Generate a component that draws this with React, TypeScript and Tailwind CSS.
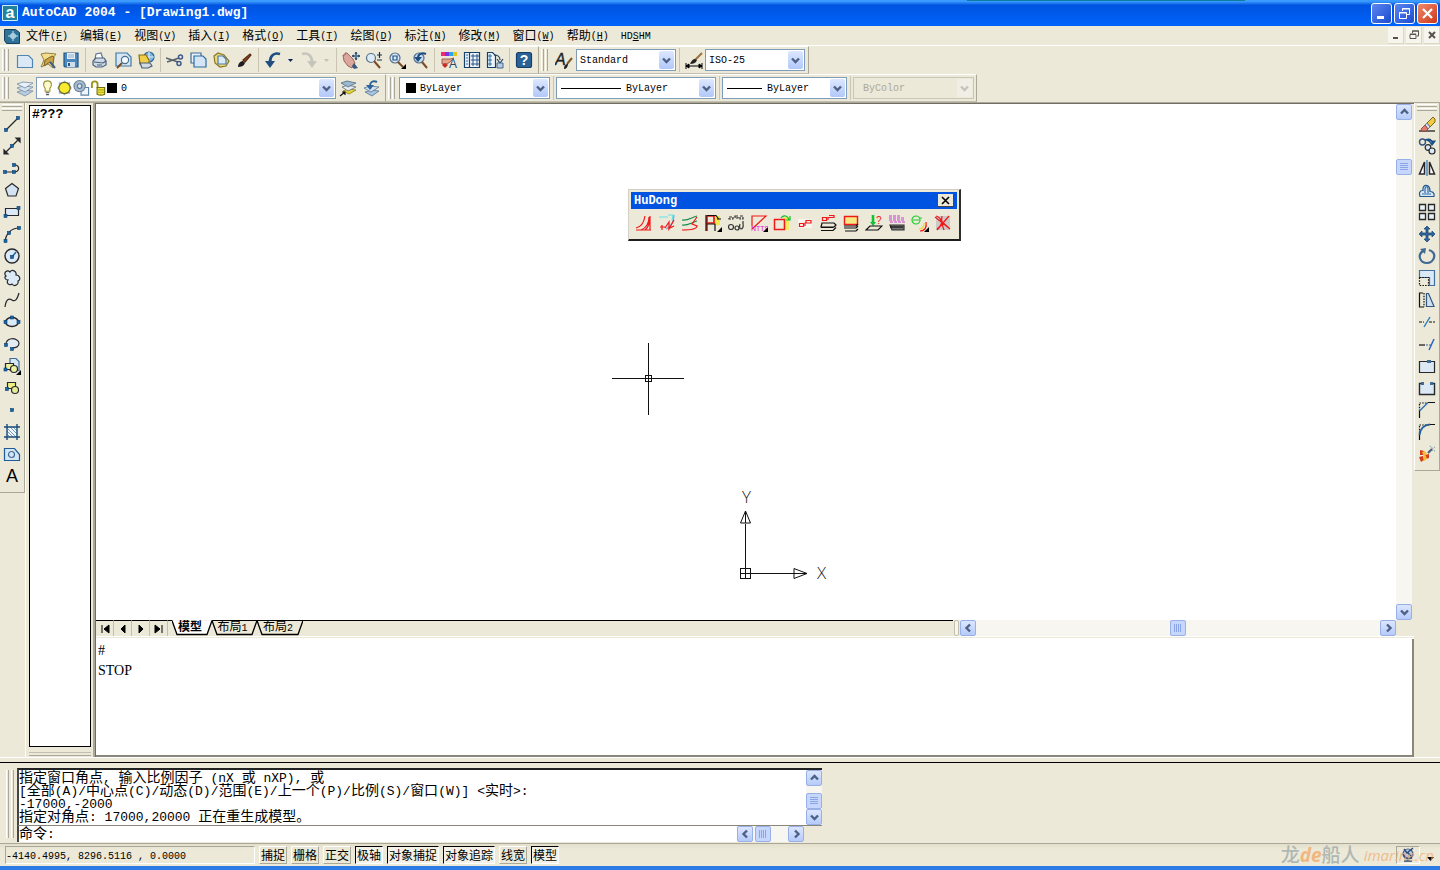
import type { ReactNode } from "react";

const MONO = "font-['Liberation_Mono','Noto_Sans_CJK_SC',monospace]";
const SANS = "font-['Liberation_Sans',sans-serif]";

interface Tool {
  name: string;
  icon: ReactNode;
}

const ink = "#26282c";
const blue = "#1767a8";
const steel = "#3f6d96";

function Dot({ x, y }: { x: number; y: number }) {
  return <rect x={x - 1.5} y={y - 1.5} width="3" height="3" fill={blue} stroke="#0c3f6e" strokeWidth=".6" />;
}

function Icon({ children }: { children: ReactNode }) {
  return (
    <svg width="18" height="18" viewBox="0 0 18 18" fill="none" stroke={ink} strokeWidth="1.2" aria-hidden="true">
      {children}
    </svg>
  );
}

function Corner() {
  return <path d="M18 13v5h-5z" fill="#000" stroke="none" />;
}

// Renders mixed text: Chinese runs one step larger than Latin runs
function Label({ text, size = "small" }: { text: string; size?: "small" | "large" }) {
  const cjk = size === "small" ? "text-[12px]" : "text-[14px]";
  const latin = size === "small" ? "text-[10px]" : "text-[13px]";
  return (
    <>
      {text.split(/([\u3000-\u9fff]+)/).filter(Boolean).map((run, i) => (
        <span key={i} className={/[\u3000-\u9fff]/.test(run) ? cjk : latin}>{run}</span>
      ))}
    </>
  );
}

/* ---------- standard toolbar ---------- */

const fileTools: Tool[] = [
  { name: "新建", icon: <path d="M1.500 4.500h11l4 4v8h-15z" fill="#dbe9f7" stroke="#4f86b5" /> },
  { name: "打开", icon: <><path d="M2 3l5-1 10 1-4 5 1 9-5-4-7 3 3-7z" fill="#f3dc8e" stroke="#8a7636" strokeWidth=".9" /><path d="M6 9l7-4 2 1-1 8-3-3-6 4z" fill="#c9a043" stroke="#6e5a20" strokeWidth=".9" /><path d="M11 11l5 6" stroke="#3e5f80" strokeWidth="2" /></> },
  { name: "保存", icon: <><path d="M2 2h14v14H3l-1-1z" fill="#4d88bd" stroke="#235683" /><path d="M5 2h8v6H5z" fill="#e5eef7" stroke="none" /><path d="M6 4h6M6 6h6" stroke="#8eb0cf" /><path d="M5 11h8v5H5z" fill="#cfdeea" stroke="none" /><path d="M7 12v3" stroke="#235683" strokeWidth="2" /></> },
];

const printTools: Tool[] = [
  { name: "打印", icon: <><path d="M4 8l1-5 5-1 2 6" fill="#fff" stroke="#5c7390" /><path d="M2 10l3-3h8l2 3v4l-4 2H5l-3-2z" fill="#cfdae6" stroke="#49607b" /><path d="M3 11l9 1 3-2M6 14h5" stroke="#49607b" /></> },
  { name: "打印预览", icon: <><path d="M2 2h11l4 4v9H2z" fill="#d6e6f5" stroke="#3f78a9" /><circle cx="11" cy="9" r="3.600" fill="#f5fbff" stroke="#49708f" /><path d="M8 12l-5 5" stroke="#7a4a22" strokeWidth="2" /></> },
  { name: "发布", icon: <><circle cx="12" cy="6" r="5" fill="#7fb5de" stroke="#2c6694" /><path d="M12 1v10M7 6h10" stroke="#d8ecfa" /><path d="M2 4h7l3 5v4H3z" fill="#f3cf45" stroke="#8a6f1c" /><path d="M3 12h10l2 3-4 2H5z" fill="#d2dbe4" stroke="#4c5f74" /></> },
];

const editTools: Tool[] = [
  { name: "剪切", icon: <><path d="M0 7l12 4M1 11l12-4" stroke="#56616e" strokeWidth="1.500" /><circle cx="14.500" cy="6" r="2" stroke="#3d5b8c" strokeWidth="1.500" /><circle cx="13" cy="12.500" r="2" stroke="#3d5b8c" strokeWidth="1.500" /></> },
  { name: "复制", icon: <><path d="M2 2h10v10H2z" fill="#e6f1fa" stroke={steel} /><path d="M5 5h9l3 3v8H5z" fill="#d4e6f5" stroke="#2b6ca3" /></> },
  { name: "粘贴", icon: <><path d="M2 5l4-3 6 2 5 6-3 5-6 1-5-4z" fill="#ecd97e" stroke="#8b7526" /><path d="M6 5h5l3 3v5H6z" fill="#dceaf6" stroke="#4a7ba3" /></> },
  { name: "特性匹配", icon: <><path d="M8 9l7-6 1 1-6 7z" fill="#8a4b25" stroke="#5b2b12" /><path d="M3 16c0-4 3-6 5-6l2 2c-1 3-4 4-7 4z" fill="#1f1f1f" stroke="none" /></> },
];

const undoIcon = <><path d="M16 3c-6-2-10 2-10 8" stroke="#1f4e80" strokeWidth="2.600" /><path d="M1 10h10l-5 7z" fill="#1f4e80" stroke="none" /></>;
const redoIcon = <><path d="M2 3c6-2 10 2 10 8" stroke="#c6c5bb" strokeWidth="2.600" /><path d="M7 10h10l-5 7z" fill="#c6c5bb" stroke="none" /></>;

const zoomTools: Tool[] = [
  { name: "实时平移", icon: <><path d="M1 4l2 0 0-2 2 0 6 6 2 4-3 5-4-2-4-5z" fill="#dba79c" stroke="#8a4b43" strokeWidth=".8" /><path d="M12 12l4 5-4 1-2-3z" fill="#335a86" stroke="none" /><path d="M14 1v8M10 5h8M14 1l-1 2h2zM14 9l-1-2h2zM10 5l2-1v2zM18 5l-2-1v2z" stroke="#20456f" strokeWidth=".9" /></> },
  { name: "实时缩放", icon: <><circle cx="6" cy="7" r="4.500" fill="#dcebf6" stroke="#56718c" /><path d="M9 10l6 7" stroke="#7b4a26" strokeWidth="2" /><path d="M12 4h5M14.500 1v6M12 9h5" stroke="#17324f" /></> },
  { name: "窗口缩放", icon: <><circle cx="7" cy="7" r="5" fill="#dcebf6" stroke="#56718c" /><path d="M5 5h4v4H5z" stroke="#1b4e82" /><path d="M10 11l5 5" stroke="#7b4a26" strokeWidth="2" /><Corner /></> },
  { name: "缩放上一个", icon: <><circle cx="8" cy="7" r="5" fill="#c7dcef" stroke="#56718c" /><path d="M15 3c-4-2-8 0-8 4" stroke="#1d4d80" strokeWidth="2" /><path d="M3 6h8l-4 5z" fill="#1d4d80" stroke="none" /><path d="M11 11l5 6" stroke="#7b4a26" strokeWidth="2" /></> },
];

const paletteTools: Tool[] = [
  { name: "特性", icon: <><path d="M1 1h4v4H1z" fill="#f02a75" stroke="none" /><path d="M5 1h4v4H5z" fill="#7b35e0" stroke="none" /><path d="M9 1h4v4H9z" fill="#25a9e8" stroke="none" /><path d="M13 1h4v4h-4z" fill="#e5c421" stroke="none" /><path d="M2 8h8l4-1-4 4-3 2H2z" fill="#e4a58f" stroke="#854a3b" strokeWidth=".8" /><path d="M2 14l3-2 3 2-3 3z" fill="#c52d22" stroke="none" /><text x="9" y="17" fontSize="12" fill="#254b77" stroke="none" className={SANS}>A</text></> },
  { name: "设计中心", icon: <><path d="M1.500 1.500h15v15h-15zM6.500 2v14" fill="#eef4fa" stroke="#17416b" /><path d="M3 4h2M3 7h2M3 10h2M3 13h2" stroke="#2c6ca6" /><path d="M9 4h2v2H9zM13 4h2v2h-2zM9 8h2v2H9zM13 8h2v2h-2zM9 12h2v2H9zM13 12h2v2h-2z" stroke="#2a5686" strokeWidth="1" /></> },
  { name: "工具选项板", icon: <><path d="M1.500 1.500h5l3 3v12h-8z" fill="#eef4fa" stroke="#17416b" /><path d="M3 4h2v2H3zM3 8h2v2H3zM3 12h2v2H3z" stroke="#2c6ca6" strokeWidth="1" /><path d="M8 4c4 0 6 1 6 5M11 8l3 4 3-4" stroke="#23405f" /><path d="M11 12h6v5h-6z" fill="#b6cde2" stroke="#45698c" strokeWidth="1" /></> },
];

const helpIcon = (
  <>
    <rect x="1.500" y="1.500" width="15" height="15" rx="2" fill="#2a6297" stroke="#163f69" />
    <text x="9" y="14" fontSize="14" fontWeight="bold" textAnchor="middle" fill="#fff" stroke="none" className={SANS}>?</text>
  </>
);

const textStyleIcon = <><text x="0" y="14" fontSize="16" fill="#1c1f23" stroke="#1c1f23" strokeWidth=".4" fontStyle="italic" className={SANS}>A</text><path d="M12 13l5-6" stroke="#82572a" strokeWidth="2" /><path d="M9 18c0-4 2-5 4-5 0 3-2 5-4 5z" fill="#222" stroke="none" /></>;
const dimStyleIcon = <><path d="M1 12v6M17 12v6M1 15h16M1 15l3-2v4zM17 15l-3-2v4z" fill="#000" stroke="#000" strokeWidth="1" /><path d="M10 9l7-7" stroke="#a0703a" strokeWidth="2" /><path d="M5 13c1-3 3-5 5-5l2 1c-1 3-4 4-7 4z" fill="#222" stroke="none" /></>;

/* ---------- layer toolbar ---------- */

const layerStack = <><path d="M1 13l6-2 10 1-8 5z" fill="#b9cde1" stroke="#7189a3" strokeWidth=".8" /><path d="M1 9l6-2 10 1-8 5z" fill="#d4e1ee" stroke="#7189a3" strokeWidth=".8" /><path d="M1 5l6-2 10 1-8 5z" fill="#e8f0f7" stroke="#7189a3" strokeWidth=".8" /></>;
const layerCurrent = <><path d="M4 12l5-2 8 1-7 4z" fill="#e8d531" stroke="#8a7d22" strokeWidth=".8" /><path d="M3 8l6-2 8 2-8 4z" fill="#e7ecef" stroke="#5d6d7c" strokeWidth=".8" /><path d="M2 4l6-2 9 2-8 4z" fill="#9db9cf" stroke="#4c6b86" strokeWidth=".8" /><path d="M1 17l5-4M3 13h3v3" stroke="#111" /></>;
const layerPrevious = <><path d="M3 13l6-2 8 1-7 5z" fill="#a7c4de" stroke="#557694" strokeWidth=".8" /><path d="M2 9l6-2 9 1-8 5z" fill="#d4e1ee" stroke="#557694" strokeWidth=".8" /><path d="M15 3c-4-2-7 0-7 4" stroke="#2b649b" strokeWidth="2" /><path d="M4 6h8l-4 5z" fill="#2b649b" stroke="none" /></>;

const layerState = [
  <><path d="M9 1.500c-5 0-5 5-2.500 8v3h5v-3C14 6.500 14 1.500 9 1.500z" fill="#fdfacb" stroke="#9b943a" /><path d="M7 14h4M7.500 16h3" stroke="#555" /></>,
  <><path d="M9 1l8 8-8 8-8-8zM3 3h12v12H3z" fill="#9bb8d8" stroke="none" /><circle cx="9" cy="9" r="6" fill="#f8ea31" stroke="#6b6b2a" /></>,
  <><path d="M8.500 8.500h8v8h-8z" fill="#eef5fb" stroke="#5f84a6" /><circle cx="7" cy="7" r="6" fill="#a9bccf" stroke="#6d8299" /><circle cx="7" cy="7" r="2.500" fill="#d8e7f2" stroke="#5a7795" /></>,
  <><path d="M2 9V5c0-4 6-4 6 0v4" stroke="#9b941e" strokeWidth="2" /><path d="M7.500 8.500h8v7c-2 1-6 1-8 0z" fill="#efe83a" stroke="#716b12" /><path d="M8 11h7M8 13.500h7" stroke="#b1a91f" /></>,
];

/* ---------- draw toolbar ---------- */

const drawTools: Tool[] = [
  { name: "直线", icon: <><path d="M3 15L15 3" /><Dot x={3} y={15} /><Dot x={15} y={3} /></> },
  { name: "构造线", icon: <><path d="M2 16L16 2M1 17v-4l4 4zM17 1v4l-4-4z" fill={ink} /><Dot x={9} y={9} /></> },
  { name: "多段线", icon: <><path d="M2 13h9c6 0 6-7 1-7" /><Dot x={2} y={13} /><Dot x={11} y={13} /><Dot x={11} y={6} /></> },
  { name: "正多边形", icon: <path d="M9 2.500l6.500 5-2.500 7.500H5L2.500 7.500z" fill="#d4e3f1" /> },
  { name: "矩形", icon: <><path d="M2.500 5.500h13v7h-13z" fill="#dce9f6" /><Dot x={2.5} y={13} /><Dot x={15.500} y={5} /></> },
  { name: "圆弧", icon: <><path d="M2 16C3 9 8 3 16 3" /><Dot x={2.500} y={16} /><Dot x={6} y={8} /><Dot x={16} y={3} /></> },
  { name: "圆", icon: <><circle cx="9" cy="9" r="7" fill="#dce9f6" strokeWidth="1.400" /><path d="M9 10l4-5" stroke={blue} strokeWidth="1.500" /><Dot x={9} y={10} /></> },
  { name: "修订云线", icon: <path d="M3 7C0 4 4 0 7 3c2-3 7-1 6 3 4 0 5 5 2 6 1 4-4 6-6 3-3 2-6-1-4-4-3 0-4-3-2-4z" fill="#dce9f6" /> },
  { name: "样条曲线", icon: <path d="M2 16c1-8 4-9 7-7s5 0 7-7" /> },
  { name: "椭圆", icon: <><ellipse cx="9" cy="9" rx="6.500" ry="4.500" fill="#dce9f6" strokeWidth="1.500" /><Dot x={2.500} y={9} /><Dot x={15.500} y={9} /><Dot x={9} y={4.5} /></> },
  { name: "椭圆弧", icon: <><path d="M3 10C2 2 15 2 16 8c0 4-4 5-7 5" fill="#e3ebf3" /><Dot x={3} y={10} /><Dot x={9} y={14} /></> },
  { name: "插入块", icon: <><path d="M7 1.500h6l3 3v9H7z" fill="#d7e7f6" stroke={steel} /><path d="M2.500 6.500h8v6h-8z" fill="#eff0a0" /><circle cx="11" cy="12" r="3.500" fill="#eff0a0" /><Dot x={2.500} y={12.500} /><Corner /></> },
  { name: "创建块", icon: <><path d="M4.500 3.500h8v6h-8z" fill="#f0f07c" /><circle cx="12" cy="11" r="3.500" fill="#e5eb94" /><Dot x={4} y={10} /></> },
  { name: "点", icon: <Dot x={9} y={9} /> },
  { name: "图案填充", icon: <><path d="M4 4h10v10H4z" fill="#f3f8fd" stroke="none" /><path d="M4 5l9 9M4 8l6 6M7 4l7 7M10 4l4 4M4 11l3 3" stroke="#4d7dab" strokeWidth=".8" /><path d="M4 1v16M14 1v16M1 4h16M1 14h16" stroke="#1b4a78" strokeWidth="1.400" /></> },
  { name: "面域", icon: <><path d="M1.500 3.500h10l5 6v6h-15z" fill="#d4e5f6" stroke="#1f5c97" /><circle cx="8.500" cy="9.500" r="3" stroke={steel} /></> },
];

/* ---------- modify toolbar ---------- */

const modifyTools: Tool[] = [
  { name: "删除", icon: <><path d="M1 16h16" stroke="#111" /><path d="M9 8l6-6 2 2v3l-5 5z" fill="#f0cb40" stroke="#6d5a1d" strokeWidth=".9" /><path d="M7 10l2-2 3 4-2 2z" fill="#d3e2f0" stroke="#4d6c8b" strokeWidth=".8" /><path d="M3 14l4-4 3 4-2 2H4z" fill="#e37c6e" stroke="#8c3f36" strokeWidth=".8" /></> },
  { name: "复制对象", icon: <><circle cx="4.500" cy="5" r="3" stroke="#33547a" strokeWidth="1.400" /><path d="M7 3c4-2 7-1 7 3M11 4l3 4 3-4z" fill="#174e86" stroke="#174e86" /><circle cx="10" cy="10.500" r="2.800" fill="#dce9f6" /><circle cx="14" cy="14" r="3" fill="#dce9f6" /></> },
  { name: "镜像", icon: <><path d="M6.500 3v12h-5zM11.500 3v12h5z" fill="#fff" strokeWidth="1.500" /><path d="M9 1v16" stroke="#2a70b8" /></> },
  { name: "偏移", icon: <><path d="M2 15.500h14c1-4-2-5-4-5 0-8-8-8-7-1-4 0-4 3-3 6z" fill="#d8e7f6" stroke="#25598c" /><path d="M4 13h9M7 12V8c0-3 3-3 3 0v4" stroke="#2d6ca6" /></> },
  { name: "阵列", icon: <path d="M1.500 1.500h6v6h-6zM10.500 1.500h6v6h-6zM1.500 10.500h6v6h-6zM10.500 10.500h6v6h-6z" fill="#eaf2f9" strokeWidth="1.300" /> },
  { name: "移动", icon: <path d="M9 1l3 3h-2v4h4V6l3 3-3 3v-2h-4v4h2l-3 3-3-3h2v-4H4v2L1 9l3-3v2h4V4H6z" fill="#2f659a" stroke="#204d78" strokeWidth=".8" /> },
  { name: "旋转", icon: <><path d="M11 3c9 3 5 13-2 13S-1 8 5 4" stroke="#416a92" strokeWidth="2.200" /><path d="M2 2l6-1-1 6z" fill="#416a92" stroke="none" /></> },
  { name: "缩放", icon: <><path d="M1.500 1.500h15v15h-5v-8h-10z" fill="#dbe8f5" stroke="#41729f" /><path d="M1.500 8.500h9v8h-9z" stroke="#111" strokeDasharray="1.500 1.200" /></> },
  { name: "拉伸", icon: <><path d="M5 2H1.500v14H6" stroke="#111" /><path d="M6 2v14" stroke="#111" strokeDasharray="1.500 1.200" /><path d="M8.500 2.500h2L16 15.500H8.500z" fill="#d0e0ef" stroke="#31577c" /></> },
  { name: "修剪", icon: <><path d="M1 9h5M11 9h6" stroke="#111" strokeDasharray="3 1" /><path d="M6 14l6-10" stroke="#2878c4" strokeWidth="1.400" /></> },
  { name: "延伸", icon: <><path d="M1 10h6" stroke="#111" /><path d="M8 10h5" stroke="#2a66a8" strokeDasharray="2 1" /><path d="M11 15l5-11" stroke="#2766c4" strokeWidth="1.500" /></> },
  { name: "打断于点", icon: <><path d="M1.500 4.500h15v11h-15z" fill="#dce9f5" /><path d="M9 3h4v3H9z" fill="#3d6c99" stroke="none" /></> },
  { name: "打断", icon: <><path d="M4 4.500H1.500v11h15v-11H14" fill="#dce9f5" strokeWidth="1.400" /><path d="M3 3h3v3H3zM12 3h3v3h-3z" fill="#3d6c99" stroke="none" /></> },
  { name: "倒角", icon: <><path d="M1.500 2h7" stroke="#111" strokeDasharray="1.500 1.200" /><path d="M1.500 3v7" stroke="#111" strokeDasharray="1.500 1.200" /><path d="M10 1.500h7M1.500 10v7" stroke="#111" /><path d="M1.500 10L10 1.500" stroke="#2c72b4" strokeWidth="1.500" /></> },
  { name: "圆角", icon: <><path d="M1.500 2h8M1.500 3v7" stroke="#111" strokeDasharray="1.500 1.200" /><path d="M12 1.500h5M1.500 12v5" stroke="#111" /><path d="M1.500 12C2 6 6 2 12 1.500" stroke="#235f98" strokeWidth="2" /></> },
  { name: "分解", icon: <><path d="M10 8l4-4" stroke="#46607c" strokeWidth="2.200" /><path d="M12 1l2 2M17 2l-3 2M17 6l-3-1" stroke="#8d9fb0" strokeDasharray="1 1" /><path d="M2 5l4 1-1 4H2zM7 10l4-1 0 4-3 1zM1 12l4-1 1 4-3 2z" fill="#d43c1c" stroke="none" /><path d="M4 7l3-1 2 3-3 3zM5 12l3-1 1 3-3 2z" fill="#f2bd38" stroke="none" /></> },
];

/* ---------- HuDong floating toolbar ---------- */

const red = "#f01818";
const huDongTools: Tool[] = [
  { name: "型线", icon: <><path d="M1 16h15M1 14c5-1 8-6 9-12M6 16c5-2 8-7 8-13M10 16c4-3 5-8 5-14v14" stroke={red} /></> },
  { name: "曲线", icon: <><path d="M1 3h9M10 1h5l-1 5" stroke="#5be3ec" /><path d="M16 1c0 6-3 11-8 14" stroke="#7fa6d8" /><path d="M2 13h5M4 11v5M7 14l4-6v7l5-9M10 15l6-3" stroke={red} /></> },
  { name: "缆线", icon: <><path d="M1 6c6 1 10-3 15-4M1 11c6 1 10-3 15-4" stroke="#1a8b4d" /><path d="M1 16c10 0 15-1 15-4l-5-2 5-7" stroke={red} /></> },
  { name: "定位", icon: <><path d="M9 2h7v9H9z" fill="#f2e84b" stroke="none" /><path d="M3 2h7v7H3zM3 9v8" stroke={red} strokeWidth="1.700" /><path d="M2 1v16M3 1.500h9l3 4M3 10h8v7M13 5h4" stroke="#111" /><Corner /></> },
  { name: "连接", icon: <><path d="M2 3h4v2H2zM8 2h3v2H8zM13 2h3v3h-3zM16 7v4" strokeDasharray="3 1" stroke="#333" /><circle cx="4" cy="13" r="2.500" stroke="#333" /><circle cx="10" cy="14" r="2" stroke="#333" /><path d="M13 10c-1 3 0 5 1 5s3-2 2-5" stroke="#333" /></> },
  { name: "注释", icon: <><path d="M2 12V2h14L2 15" stroke={red} strokeWidth="1.200" /><text x="1" y="17" fontSize="7" fill="#e21bdb" stroke="none" className={SANS}>NTTS</text><Corner /></> },
  { name: "移位", icon: <><path d="M10 3h6v13h-6z" fill="#f5ec63" stroke="none" /><path d="M1.500 5.500h10v10h-10z" stroke={red} strokeWidth="1.500" /><path d="M8 4c3-4 7-2 8 2M13 6h4V2" stroke="#12ba32" /></> },
  { name: "标签", icon: <><path d="M2 5h14v9H2z" fill="#f6f5ee" stroke="none" /><path d="M3.500 9.500h4v3h-4zM9 12V9h6V6.500h-5V9" stroke={red} /></> },
  { name: "批量标签", icon: <><path d="M3.500 3.500h4v3h-4zM9 6V3.500h6V1.500h-5" stroke={red} /><path d="M3 9h12l2 2-2 2H2zM2 13.500h12l3-2M2 16.500h12l3-3" stroke="#111" /></> },
  { name: "图层", icon: <><path d="M2.500 2.500h13v8h-13z" fill="#f8e882" stroke={red} strokeWidth="1.400" /><path d="M2 12h12l2-2M2 14h12l2-2M3 17h11l2-2" stroke="#111" /></> },
  { name: "查询", icon: <><path d="M8 1v9" stroke="#12c434" strokeWidth="2.600" /><path d="M5 8h6l-3 4z" fill="#12c434" stroke="none" /><text x="11" y="10" fontSize="10" fill={red} stroke="none" className={SANS}>?</text><path d="M1 16l4-4h12l-4 4z" stroke="#111" /></> },
  { name: "列表", icon: <><path d="M1 2h11M1 4h15M1 6h16M2 8h15" stroke="#c640d4" strokeDasharray="3 1" /><path d="M2 11h14v5H4z" fill="#777" stroke="#333" /><path d="M2 13h13" stroke="#111" /></> },
  { name: "旋转对象", icon: <><circle cx="5" cy="6" r="4" stroke="#1ccd2c" /><path d="M2 6h6M8 4h3" stroke="#1ccd2c" /><path d="M9 17c5 0 7-4 6-9" stroke={red} /><path d="M8 15c4 0 5-3 5-6" stroke="#f0db38" strokeWidth="1.500" /><Corner /></> },
  { name: "删除线", icon: <><path d="M2 2h14v14H2z" fill="#cccac8" stroke="none" /><path d="M1 3l15 12M15 2L3 16M2 2c6 2 8 8 1 13M8 2c-1 5 0 9 2 14M6 6l9 8" stroke={red} /></> },
];

/* ---------- shared pieces ---------- */

function ToolButton({ tool, className }: { tool: Tool; className: string }) {
  return (
    <button type="button" title={tool.name} aria-label={tool.name} className={`flex shrink-0 items-center justify-center ${className}`}>
      <Icon>{tool.icon}</Icon>
    </button>
  );
}

function ToolRow({ tools }: { tools: Tool[] }) {
  return (
    <>
      {tools.map((tool) => (
        <ToolButton key={tool.name} tool={tool} className="h-6 w-[23px]" />
      ))}
    </>
  );
}

function Separator() {
  return <div className="mr-0.5 ml-[3px] h-6 w-px shrink-0 bg-[#c9c5b2]" />;
}

function Grip() {
  return (
    <div className="mr-1 flex shrink-0 gap-px self-stretch py-0.5">
      <div className="w-[3px] border-r border-l border-r-[#aca899] border-l-white" />
      <div className="w-[3px] border-r border-l border-r-[#aca899] border-l-white" />
    </div>
  );
}

function GripTop() {
  return (
    <div className="mb-0.5 flex w-full flex-col gap-px px-0.5 pt-px">
      <div className="h-[3px] border-t border-b border-t-white border-b-[#aca899]" />
      <div className="h-[3px] border-t border-b border-t-white border-b-[#aca899]" />
    </div>
  );
}

function CaretButton({ label, faded }: { label: string; faded?: boolean }) {
  return (
    <button type="button" aria-label={label} className="flex h-6 w-[13px] shrink-0 items-center justify-center">
      <svg width="5" height="3" aria-hidden="true">
        <path d="M0 0h5L2.500 3z" fill={faded ? "#c4c1b2" : "#0b2456"} />
      </svg>
    </button>
  );
}

const chevrons = {
  up: "M2 6.500l3.500-3.500L9 6.500",
  down: "M2 3.500L5.500 7 9 3.500",
  left: "M7 1.500L3.500 5 7 8.500",
  right: "M4 1.500L7.500 5 4 8.500",
};

function Chevron({ dir, color = "#4d6185" }: { dir: keyof typeof chevrons; color?: string }) {
  return (
    <svg width="11" height="10" viewBox="0 0 11 10" aria-hidden="true">
      <path d={chevrons[dir]} fill="none" stroke={color} strokeWidth="2.400" />
    </svg>
  );
}

interface ComboProps {
  label: string;
  value: string;
  width: string;
  disabled?: boolean;
  children?: ReactNode;
}

function Combo({ label, value, width, disabled, children }: ComboProps) {
  return (
    <div className={`flex h-[22px] shrink-0 items-center border pr-px ${width} ${disabled ? "border-[#c9c7ba] bg-[#ece9d8]" : "border-[#7f9db9] bg-white"}`}>
      {children}
      <select
        aria-label={label}
        disabled={disabled}
        className={`h-full min-w-0 flex-1 appearance-none bg-transparent text-[10px] outline-none ${disabled ? "pl-[9px] text-[#aca899] opacity-100" : "pl-[3px] text-black"}`}
      >
        <option>{value}</option>
      </select>
      <span className={`flex h-[18px] w-[15px] shrink-0 items-center justify-center rounded-xs ${disabled ? "bg-[#f1efe5]" : "bg-linear-to-b from-[#dde7ff] to-[#b2c8f9]"}`}>
        <Chevron dir="down" color={disabled ? "#c6c4b8" : "#4d6185"} />
      </span>
    </div>
  );
}

function ScrollButton({ dir }: { dir: keyof typeof chevrons }) {
  return (
    <button type="button" aria-label={`scroll ${dir}`} className="flex size-4 shrink-0 items-center justify-center rounded-xs border border-[#98b0e8] bg-linear-to-b from-[#dce6ff] to-[#b6cbfa]">
      <Chevron dir={dir} />
    </button>
  );
}

function Thumb({ vertical }: { vertical?: boolean }) {
  return (
    <div className="flex size-4 shrink-0 items-center justify-center rounded-xs border border-[#98b0e8] bg-[#c6d6fd]">
      <svg width="8" height="8" aria-hidden="true">
        <path d={vertical ? "M0 .5h8M0 2.500h8M0 4.500h8M0 6.500h8" : "M.5 0v8M2.500 0v8M4.500 0v8M6.500 0v8"} stroke="#8ba4e6" />
      </svg>
    </div>
  );
}

/* ---------- window sections ---------- */

function TitleBar() {
  const button = "flex size-[21px] items-center justify-center rounded-[3px] border border-white";
  return (
    <header className="relative flex h-[26px] shrink-0 items-center bg-linear-to-b from-[#3c9bff] from-5% via-[#0053e0] via-20% to-[#0064fc] px-0.5">
      <div className="absolute top-0 right-[195px] h-px w-[278px] bg-[#0b7e9e]" />
      <svg width="16" height="16" viewBox="0 0 16 16" aria-hidden="true">
        <path d="M.5.5h15v15H.5z" fill="#21839b" stroke="#d5edf2" />
        <text x="8" y="13" fontSize="16" fontWeight="bold" textAnchor="middle" fill="#fff" className={SANS}>a</text>
      </svg>
      <h1 className="ml-1 flex-1 text-[13px] font-bold whitespace-pre text-white">AutoCAD 2004 - [Drawing1.dwg]</h1>
      <div className="flex gap-0.5">
        <button type="button" aria-label="minimize" className={`bg-linear-to-br from-[#5c86ef] to-[#1c49d0] ${button}`}>
          <svg width="13" height="13" aria-hidden="true"><path d="M2 9h7v3H2z" fill="#fff" /></svg>
        </button>
        <button type="button" aria-label="restore" className={`bg-linear-to-br from-[#5c86ef] to-[#1c49d0] ${button}`}>
          <svg width="13" height="13" fill="none" stroke="#fff" aria-hidden="true"><path d="M4.500 4V1.500h7v6H9M4 2h8M1.500 5.500h7v6h-7zM1 6h8" /></svg>
        </button>
        <button type="button" aria-label="close" className={`bg-linear-to-br from-[#f0886a] to-[#cc3310] ${button}`}>
          <svg width="13" height="13" aria-hidden="true"><path d="M2 2l9 9M11 2l-9 9" stroke="#fff" strokeWidth="2.200" /></svg>
        </button>
      </div>
    </header>
  );
}

const menus = [
  ["文件", "F"], ["编辑", "E"], ["视图", "V"], ["插入", "I"], ["格式", "O"], ["工具", "T"],
  ["绘图", "D"], ["标注", "N"], ["修改", "M"], ["窗口", "W"], ["帮助", "H"],
];

function MenuBar() {
  const button = "flex h-[17px] w-4 items-center justify-center border-r border-b border-[#dcd8c4] bg-[#f6f5ee]";
  return (
    <nav className="flex h-5 shrink-0 items-center border-b border-white bg-[#ece9d8] pl-1">
      <svg width="16" height="16" viewBox="0 0 16 16" className="mr-1.5" aria-hidden="true">
        <path d="M.5 1.500h11l4 3v11h-13l-2-3z" fill="#2e7199" stroke="#17425f" />
        <path d="M9 3v10M4 8h10M7 6h4v4H7z" fill="none" stroke="#cfeaf5" />
      </svg>
      <div className="flex flex-1 gap-3 pt-0.5">
        {menus.map(([name, key]) => (
          <button key={name} type="button" className="flex items-center whitespace-nowrap">
            <span className="text-[12px] leading-4">{name}</span>
            <span className="text-[10px] leading-4">(<u>{key}</u>)</span>
          </button>
        ))}
        <button type="button" className="text-[10px] leading-4">HD<u>S</u>HM</button>
      </div>
      <div className="flex gap-0.5">
        <button type="button" aria-label="minimize drawing" className={button}>
          <svg width="10" height="10" aria-hidden="true"><path d="M2 7h5v2H2z" fill="#55534c" /></svg>
        </button>
        <button type="button" aria-label="restore drawing" className={button}>
          <svg width="10" height="10" fill="none" stroke="#55534c" aria-hidden="true"><path d="M3.500 3V1h6v5H8M1 4.500h6v4H1zM1 4h6M3 1h7" /></svg>
        </button>
        <button type="button" aria-label="close drawing" className={button}>
          <svg width="10" height="10" aria-hidden="true"><path d="M2 2l6 6M8 2L2 8" stroke="#55534c" strokeWidth="2" /></svg>
        </button>
      </div>
    </nav>
  );
}

const bar = "flex h-7 shrink-0 items-center border-t border-r border-b border-t-white border-r-[#aca899] border-b-[#c3bfae] pl-0.5";

function StandardBar() {
  return (
    <div className="flex">
      <div className={`${bar} w-[539px]`}>
        <Grip />
        <ToolRow tools={fileTools} />
        <Separator />
        <ToolRow tools={printTools} />
        <Separator />
        <ToolRow tools={editTools} />
        <Separator />
        <ToolButton tool={{ name: "放弃", icon: undoIcon }} className="h-6 w-[23px]" />
        <CaretButton label="放弃列表" />
        <ToolButton tool={{ name: "重做", icon: redoIcon }} className="h-6 w-[23px]" />
        <CaretButton label="重做列表" faded />
        <Separator />
        <ToolRow tools={zoomTools} />
        <Separator />
        <ToolRow tools={paletteTools} />
        <Separator />
        <ToolButton tool={{ name: "帮助", icon: helpIcon }} className="h-6 w-[23px]" />
      </div>
      <div className={`${bar} w-[270px]`}>
        <Grip />
        <ToolButton tool={{ name: "文字样式", icon: textStyleIcon }} className="h-6 w-6" />
        <Combo label="文字样式控制" value="Standard" width="w-[100px]" />
        <Separator />
        <ToolButton tool={{ name: "标注样式", icon: dimStyleIcon }} className="h-6 w-[23px]" />
        <Combo label="标注样式控制" value="ISO-25" width="w-[100px]" />
      </div>
    </div>
  );
}

function PropertyBar() {
  return (
    <div className="flex">
      <div className={`${bar} w-[386px]`}>
        <Grip />
        <ToolButton tool={{ name: "图层特性管理器", icon: layerStack }} className="h-6 w-[23px]" />
        <Combo label="图层" value="0" width="w-[300px]">
          <div className="flex items-center pl-0.5">
            {layerState.map((state, i) => (
              <div key={i} className="flex w-[17px] justify-center">
                <Icon>{state}</Icon>
              </div>
            ))}
            <div className="mr-px size-[10px] bg-black" />
          </div>
        </Combo>
        <ToolButton tool={{ name: "置为当前", icon: layerCurrent }} className="h-6 w-[23px]" />
        <ToolButton tool={{ name: "上一个图层", icon: layerPrevious }} className="h-6 w-[23px]" />
      </div>
      <div className={`${bar} w-[591px]`}>
        <Grip />
        <Combo label="颜色" value="ByLayer" width="w-[151px]">
          <div className="mr-px ml-1.5 size-[10px] bg-black" />
        </Combo>
        <Separator />
        <Combo label="线型" value="ByLayer" width="w-[160px]">
          <div className="mr-0.5 ml-1 h-px w-[60px] bg-black" />
        </Combo>
        <Separator />
        <Combo label="线宽" value="ByLayer" width="w-[125px]">
          <div className="mr-0.5 ml-1 h-px w-[35px] bg-black" />
        </Combo>
        <Separator />
        <Combo label="打印样式" value="ByColor" width="w-[121px]" disabled />
      </div>
    </div>
  );
}

function HuDongWindow() {
  return (
    <section className="absolute top-[85px] left-[532px] border-t border-r-2 border-b-2 border-l border-t-[#d4d0c8] border-r-[#2e2e2e] border-b-[#1c1c1c] border-l-[#d4d0c8] bg-[#ece9d8] p-0.5">
      <header className="flex h-[17px] items-center bg-[#0053e1] px-[3px]">
        <h2 className="flex-1 text-[12px] leading-[14px] font-bold text-white">HuDong</h2>
        <button type="button" aria-label="close HuDong" className="flex h-[13px] w-4 items-center justify-center border-r border-b border-[#444] bg-[#ece9d8]">
          <svg width="9" height="9" aria-hidden="true"><path d="M1 1l7 7M8 1L1 8" stroke="#000" strokeWidth="1.600" /></svg>
        </button>
      </header>
      <div className="flex h-7 items-center pr-[3px] pl-px">
        <ToolRow tools={huDongTools} />
      </div>
    </section>
  );
}

function Drawing() {
  const axis = "font-['Open_Sans',sans-serif] font-light";
  return (
    <svg className="absolute inset-0 size-full" fill="none" stroke="#111" shapeRendering="crispEdges" aria-hidden="true">
      <path d="M552.500 239v33M552.500 277v34M516 274.500h34M555 274.500h33M549.500 271.500h6v6h-6zM552.500 271v7M549 274.500h7" />
      <path d="M649.500 474V420M649 469.500h50M644.500 464.500h10v10h-10zM644 469.500h5" />
      <path d="M649.500 407l-5 12h10zM649.500 407v12M711 469.500l-13-5v10zM698 469.500h13" shapeRendering="auto" />
      <text x="646" y="399" fontSize="17" fill="#222" stroke="none" className={axis}>Y</text>
      <text x="721" y="475" fontSize="17" fill="#222" stroke="none" className={axis}>X</text>
    </svg>
  );
}

const tabArrows = [
  { name: "首页", d: "M2 1v8M9 1v8L4 5z" },
  { name: "上一页", d: "M7 1v8L3 5z" },
  { name: "下一页", d: "M3 1v8l4-4z" },
  { name: "末页", d: "M1 1v8l5-4zM8 1v8" },
];

const layouts = [
  { name: "模型", width: "w-[40px]", w: 40 },
  { name: "布局1", width: "w-[45px]", w: 45 },
  { name: "布局2", width: "w-[46px]", w: 46 },
];

function TabStrip() {
  return (
    <div className="flex h-4 shrink-0 bg-[#ece9d8]">
      {tabArrows.map((arrow) => (
        <button key={arrow.name} type="button" aria-label={arrow.name} className="flex w-[18px] items-center justify-center border-t border-r border-t-black border-r-[#c3bfae]">
          <svg width="10" height="10" fill="#000" stroke="#000" aria-hidden="true"><path d={arrow.d} /></svg>
        </button>
      ))}
      <div className="w-1 border-t border-black" />
      {layouts.map(({ name, width, w }, i) => (
        <button key={name} type="button" className={`relative flex items-center justify-center whitespace-nowrap ${width} ${i === 0 ? "font-bold" : ""}`}>
          <svg width={w} height="16" className="absolute inset-0" aria-hidden="true">
            <path d={`M0 .5L5 14.500H${w - 5}L${w} .5`} fill={i === 0 ? "#fff" : "#ece9d8"} stroke="#000" strokeWidth="1.300" />
            {i > 0 && <path d={`M0 .5h${w}`} stroke="#000" />}
          </svg>
          <span className="relative pr-1 leading-[13px]"><Label text={name} /></span>
        </button>
      ))}
      <div className="flex-1 border-t border-black" />
      <div className="mx-px w-[5px] rounded-xs border border-[#c3bfae] bg-[#f6f5ee]" />
      <div className="flex w-[436px] items-center bg-[#f7f6f1]">
        <ScrollButton dir="left" />
        <div className="flex flex-1 justify-center">
          <Thumb />
        </div>
        <ScrollButton dir="right" />
      </div>
      <div className="w-[18px]" />
    </div>
  );
}

function Workspace() {
  return (
    <main className="flex min-h-0 flex-1 border-t border-[#aca899]">
      <div className="flex w-[25px] shrink-0 flex-col items-center self-start border-r border-b border-[#aca899] pb-[5px]">
        <GripTop />
        {drawTools.map((tool) => (
          <ToolButton key={tool.name} tool={tool} className="h-[22px] w-6" />
        ))}
        <button type="button" title="多行文字" className={`h-[22px] w-6 text-[18px] leading-[22px] ${SANS}`}>A</button>
      </div>

      <aside className="flex w-[68px] shrink-0 flex-col border-l border-white pt-0.5 pr-0.5 pl-[3px]">
        <div className="flex-1 border border-black bg-white px-0.5 pt-px text-[13px] leading-4 font-bold">#???</div>
        <div className="mt-[5px] mb-px h-1 border-t border-b border-t-[#c3bfae] border-b-[#aca899]" />
      </aside>

      <div className="flex min-w-0 flex-1 border-l-2 border-[#aca899]">
        <div className="flex min-w-0 flex-1 flex-col border-t border-l border-[#716f64]">
          <div className="flex min-h-0 flex-1 bg-white">
            <div className="relative min-w-0 flex-1 overflow-hidden">
              <Drawing />
              <HuDongWindow />
            </div>
            <div className="flex w-[18px] flex-col border-r-2 border-r-[#ece9d8] bg-[#f7f6f1]">
              <ScrollButton dir="up" />
              <div className="flex-1 pt-[39px]">
                <Thumb vertical />
              </div>
              <ScrollButton dir="down" />
            </div>
          </div>
          <TabStrip />
          <div className="h-[3px] shrink-0 border-y border-y-white" />
          <div className="h-[118px] shrink-0 border-r-2 border-b-2 border-[#8a877a] bg-white px-0.5 pt-0.5 font-['Liberation_Serif','Noto_Serif_CJK_SC',serif] text-[14px] leading-5">
            <p>#</p>
            <p>STOP</p>
          </div>
        </div>
      </div>

      <div className="flex w-[26px] shrink-0 flex-col items-center self-start border-r border-b border-l border-r-[#aca899] border-b-[#aca899] border-l-white pb-[5px]">
        <GripTop />
        {modifyTools.map((tool) => (
          <ToolButton key={tool.name} tool={tool} className="h-[22px] w-6" />
        ))}
      </div>
    </main>
  );
}

const history = [
  "指定窗口角点, 输入比例因子 (nX 或 nXP), 或",
  "[全部(A)/中心点(C)/动态(D)/范围(E)/上一个(P)/比例(S)/窗口(W)] <实时>:",
  "-17000,-2000",
  "指定对角点: 17000,20000 正在重生成模型。",
];

function CommandPanel() {
  return (
    <section className="flex h-20 shrink-0 pt-[5px] pl-1">
      <div className="flex gap-0.5 py-0.5 pr-[3px] pl-0.5">
        <div className="h-[68px] w-[3px] border-r border-l border-r-[#aca899] border-l-white" />
        <div className="h-[68px] w-[3px] border-r border-l border-r-[#aca899] border-l-white" />
      </div>
      <div className="flex w-[805px] flex-col">
        <div className="flex h-[58px] border-t-2 border-b border-l-2 border-t-[#222] border-b-[#8a877a] border-l-[#444] bg-white">
          <div className="flex-1 overflow-hidden pt-0.5 whitespace-pre">
            {history.map((line) => (
              <p key={line} className="h-[13px] leading-[13px]"><Label text={line} size="large" /></p>
            ))}
          </div>
          <div className="flex w-4 flex-col bg-[#f7f6f1]">
            <ScrollButton dir="up" />
            <div className="flex flex-1 flex-col justify-end">
              <Thumb vertical />
            </div>
            <ScrollButton dir="down" />
          </div>
        </div>
        <div className="flex h-4">
          <label className="flex flex-1 items-center border-l-2 border-[#444] bg-white whitespace-pre">
            <span className="leading-4"><Label text="命令:" size="large" /></span>
            <input type="text" className="h-4 min-w-0 flex-1 bg-transparent pl-1 text-[13px] outline-none" />
          </label>
          <div className="mr-[18px] flex w-[67px] bg-[#f7f6f1]">
            <ScrollButton dir="left" />
            <div className="flex-1 pl-0.5">
              <Thumb />
            </div>
            <ScrollButton dir="right" />
          </div>
        </div>
      </div>
    </section>
  );
}

const modes = [
  { name: "捕捉", on: false },
  { name: "栅格", on: false },
  { name: "正交", on: false },
  { name: "极轴", on: true },
  { name: "对象捕捉", on: true },
  { name: "对象追踪", on: true },
  { name: "线宽", on: false },
  { name: "模型", on: true },
];

function StatusBar() {
  return (
    <footer className="relative flex h-[22px] shrink-0 items-center gap-1 bg-linear-to-b from-[#e3dfcc] via-[#ece9d8] via-25% to-[#ece9d8] pr-1 pl-[5px]">
      <div className="h-[18px] w-[250px] border border-t-[#aca899] border-r-white border-b-white border-l-[#aca899] pt-1 text-[10px] leading-3 whitespace-pre">-4140.4995, 8296.5116 , 0.0000</div>
      {modes.map(({ name, on }) => (
        <button
          key={name}
          type="button"
          aria-pressed={on}
          className={`h-[18px] border px-px pt-1 text-[12px] leading-3 whitespace-nowrap ${on ? "border-t-black border-r-white border-b-white border-l-black bg-[#f3f1e7]" : "border-t-white border-r-[#aca899] border-b-[#aca899] border-l-white"}`}
        >
          {name}
        </button>
      ))}
      <div className="flex-1" />
      <button type="button" aria-label="通讯中心" className="flex h-[18px] w-6 items-center justify-center border border-t-[#aca899] border-r-white border-b-white border-l-[#aca899]">
        <Icon>
          <circle cx="9" cy="8" r="5" fill="#b7c9df" stroke="#4d6485" />
          <path d="M5 3l3 4 6-5M9 7l4 4M4 8c2 4 5 5 9 4M5 15h8" stroke="#28477b" strokeWidth="1.400" />
        </Icon>
      </button>
      <button type="button" aria-label="状态行菜单" className="flex h-4 w-3 items-end justify-center">
        <svg width="7" height="6" aria-hidden="true"><path d="M0 0h7L3.500 4z" /></svg>
      </button>
      <div className="pointer-events-none absolute right-1.5 bottom-0 flex items-center gap-1 whitespace-nowrap opacity-70">
        <span className="font-['Noto_Sans_CJK_SC',sans-serif] text-[19px] leading-[22px] font-medium text-[#96a3a5]">
          龙<i className="font-['Open_Sans',sans-serif] font-bold text-[#f2a35c]">de</i>船人
        </span>
        <i className="font-['Open_Sans',sans-serif] text-[15px] leading-[22px] text-[#f0a96c]">imarine.cn</i>
      </div>
    </footer>
  );
}

export default function App() {
  return (
    <div className={`flex h-screen min-h-[640px] flex-col overflow-hidden bg-[#ece9d8] text-black ${MONO}`}>
      <TitleBar />
      <MenuBar />
      <StandardBar />
      <PropertyBar />
      <Workspace />
      <div className="h-1.5 shrink-0 border-t border-b border-t-white border-b-black" />
      <CommandPanel />
      <div className="h-px shrink-0 bg-[#aca899]" />
      <StatusBar />
      <div className="h-1 shrink-0 bg-[#2c7ae6]" />
    </div>
  );
}
